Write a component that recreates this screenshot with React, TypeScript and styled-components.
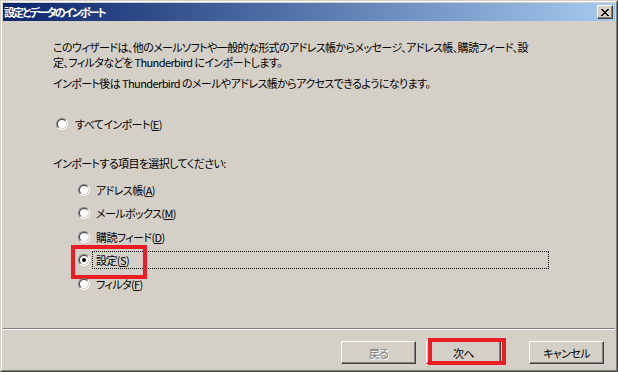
import React from 'react';
import styled, { createGlobalStyle } from 'styled-components';

const GlobalStyle = createGlobalStyle`
  html, body {
    margin: 0;
    padding: 0;
    background: #d4d0c8;
  }
  body {
    font-family: "Noto Sans CJK JP", "Noto Sans", sans-serif;
    font-size: 11px;
    letter-spacing: -0.6px;
    color: #000;
  }
`;

const Window = styled.div`
  width: 618px;
  height: 372px;
  box-sizing: border-box;
  border: 1px solid;
  border-color: #d4d0c8 #404040 #404040 #d4d0c8;
  background: #d4d0c8;
  display: flex;
`;

const Inner = styled.div`
  flex: 1;
  border: 1px solid;
  border-color: #fff #808080 #808080 #fff;
  padding: 1px;
  display: flex;
  flex-direction: column;
`;

const TitleBar = styled.div`
  height: 18px;
  flex-shrink: 0;
  display: flex;
  align-items: center;
  padding: 0 2px 0 1px;
  background: linear-gradient(to right, #0a246a, #a6caf0);
  color: #fff;
  font-weight: bold;
  font-size: 11px;
  letter-spacing: -1.9px;
  font-feature-settings: "palt";
`;

const Title = styled.span`
  flex: 1;
  white-space: nowrap;
  line-height: 18px;
`;

const CloseButton = styled.div`
  width: 16px;
  height: 14px;
  box-sizing: border-box;
  background: #d4d0c8;
  border: 1px solid;
  border-color: #fff #404040 #404040 #fff;
  box-shadow: inset -1px -1px #808080;
  display: flex;
  align-items: center;
  justify-content: center;
`;

const Client = styled.div`
  flex: 1;
  display: flex;
  flex-direction: column;
`;

const Content = styled.div`
  padding: 19px 0 0 50px;
  font-feature-settings: "palt";
`;

const Para = styled.p<{ $top?: number }>`
  margin: ${p => p.$top ?? 0}px 0 0;
  line-height: 15px;
  white-space: nowrap;
`;

const AllRow = styled.div`
  height: 16px;
  margin-top: 25px;
  padding-left: 3px;
  display: flex;
  align-items: center;
  gap: 7px;
  white-space: nowrap;
`;

const Prompt = styled.div`
  margin-top: 24px;
  line-height: 15px;
  white-space: nowrap;
`;

const ItemList = styled.div`
  margin-top: 7px;
  display: flex;
  flex-direction: column;
`;

const ItemRow = styled.div`
  position: relative;
  height: 23.5px;
  padding-left: 25px;
  display: flex;
  align-items: center;
`;

const ItemLabel = styled.div<{ $focused?: boolean }>`
  margin-left: 2px;
  width: 457px;
  height: 18px;
  box-sizing: border-box;
  padding: 0 3px;
  border: 1px dotted ${p => (p.$focused ? '#000' : 'transparent')};
  display: flex;
  align-items: center;
  white-space: nowrap;
`;

const RadioOuter = styled.span`
  width: 12px;
  height: 12px;
  box-sizing: border-box;
  border-radius: 50%;
  border: 1px solid;
  border-color: #808080 #fff #fff #808080;
  display: inline-flex;
  flex-shrink: 0;
`;

const RadioInner = styled.span<{ $checked?: boolean }>`
  flex: 1;
  border-radius: 50%;
  border: 1px solid;
  border-color: #404040 #d4d0c8 #d4d0c8 #404040;
  background: #fff;
  display: flex;
  align-items: center;
  justify-content: center;
  &::after {
    content: '';
    width: 4px;
    height: 4px;
    border-radius: 50%;
    background: ${p => (p.$checked ? '#000' : 'transparent')};
  }
`;

const Marker = styled.div<{ $left: number; $top: number; $w: number; $h: number }>`
  position: absolute;
  left: ${p => p.$left}px;
  top: ${p => p.$top}px;
  width: ${p => p.$w}px;
  height: ${p => p.$h}px;
  box-sizing: border-box;
  border: 4px solid #ed1c24;
  pointer-events: none;
`;

const Footer = styled.div`
  margin-top: auto;
`;

const Separator = styled.div`
  border-top: 1px solid #808080;
  border-bottom: 1px solid #fff;
`;

const ButtonRow = styled.div`
  display: flex;
  justify-content: flex-end;
  gap: 10px;
  padding: 11px 11px 5px 0;
`;

const Button = styled.div<{ $disabled?: boolean; $spaced?: boolean }>`
  position: relative;
  width: 75px;
  height: 23px;
  box-sizing: border-box;
  margin-left: ${p => (p.$spaced ? 18 : 0)}px;
  background: #d4d0c8;
  border: 1px solid;
  border-color: #fff #404040 #404040 #fff;
  box-shadow: inset -1px -1px #808080;
  display: flex;
  align-items: center;
  justify-content: center;
  font-feature-settings: "palt";
  color: ${p => (p.$disabled ? '#808080' : '#000')};
  text-shadow: ${p => (p.$disabled ? '1px 1px 0 #fff' : 'none')};
`;

const xPixels = [
  [0, 0], [1, 0], [6, 0], [7, 0],
  [1, 1], [2, 1], [5, 1], [6, 1],
  [2, 2], [3, 2], [4, 2], [5, 2],
  [3, 3], [4, 3],
  [2, 4], [3, 4], [4, 4], [5, 4],
  [1, 5], [2, 5], [5, 5], [6, 5],
  [0, 6], [1, 6], [6, 6], [7, 6],
];

const CloseGlyph = () => (
  <svg width="8" height="7" viewBox="0 0 8 7" shapeRendering="crispEdges">
    {xPixels.map(([x, y]) => (
      <rect key={`${x}-${y}`} x={x} y={y} width="1" height="1" fill="#000" />
    ))}
  </svg>
);

const Radio = ({ checked }: { checked?: boolean }) => (
  <RadioOuter>
    <RadioInner $checked={checked} />
  </RadioOuter>
);

const items = [
  { label: 'アドレス帳', key: 'A' },
  { label: 'メールボックス', key: 'M' },
  { label: '購読フィード', key: 'D' },
  { label: '設定', key: 'S' },
  { label: 'フィルタ', key: 'F' },
];

const App: React.FC = () => {
  const selected = 'S';

  return (
    <>
      <GlobalStyle />
      <Window>
        <Inner>
          <TitleBar>
            <Title>設定とデータのインポート</Title>
            <CloseButton>
              <CloseGlyph />
            </CloseButton>
          </TitleBar>
          <Client>
            <Content>
              <Para>
                このウィザードは、他のメールソフトや一般的な形式のアドレス帳からメッセージ、アドレス帳、購読フィード、設
                <br />
                定、フィルタなどを Thunderbird にインポートします。
              </Para>
              <Para $top={6}>インポート後は Thunderbird のメールやアドレス帳からアクセスできるようになります。</Para>
              <AllRow>
                <Radio />
                <span>
                  すべてインポート(<u>E</u>)
                </span>
              </AllRow>
              <Prompt>インポートする項目を選択してください:</Prompt>
              <ItemList>
                {items.map(item => (
                  <ItemRow key={item.key}>
                    <Radio checked={item.key === selected} />
                    <ItemLabel $focused={item.key === selected}>
                      {item.label}(<u>{item.key}</u>)
                    </ItemLabel>
                    {item.key === selected && <Marker $left={18} $top={-4} $w={76} $h={34} />}
                  </ItemRow>
                ))}
              </ItemList>
            </Content>
            <Footer>
              <Separator />
              <ButtonRow>
                <Button $disabled>戻る</Button>
                <Button>
                  次へ
                  <Marker $left={1} $top={-4} $w={78} $h={27} />
                </Button>
                <Button $spaced>キャンセル</Button>
              </ButtonRow>
            </Footer>
          </Client>
        </Inner>
      </Window>
    </>
  );
};

export default App;
